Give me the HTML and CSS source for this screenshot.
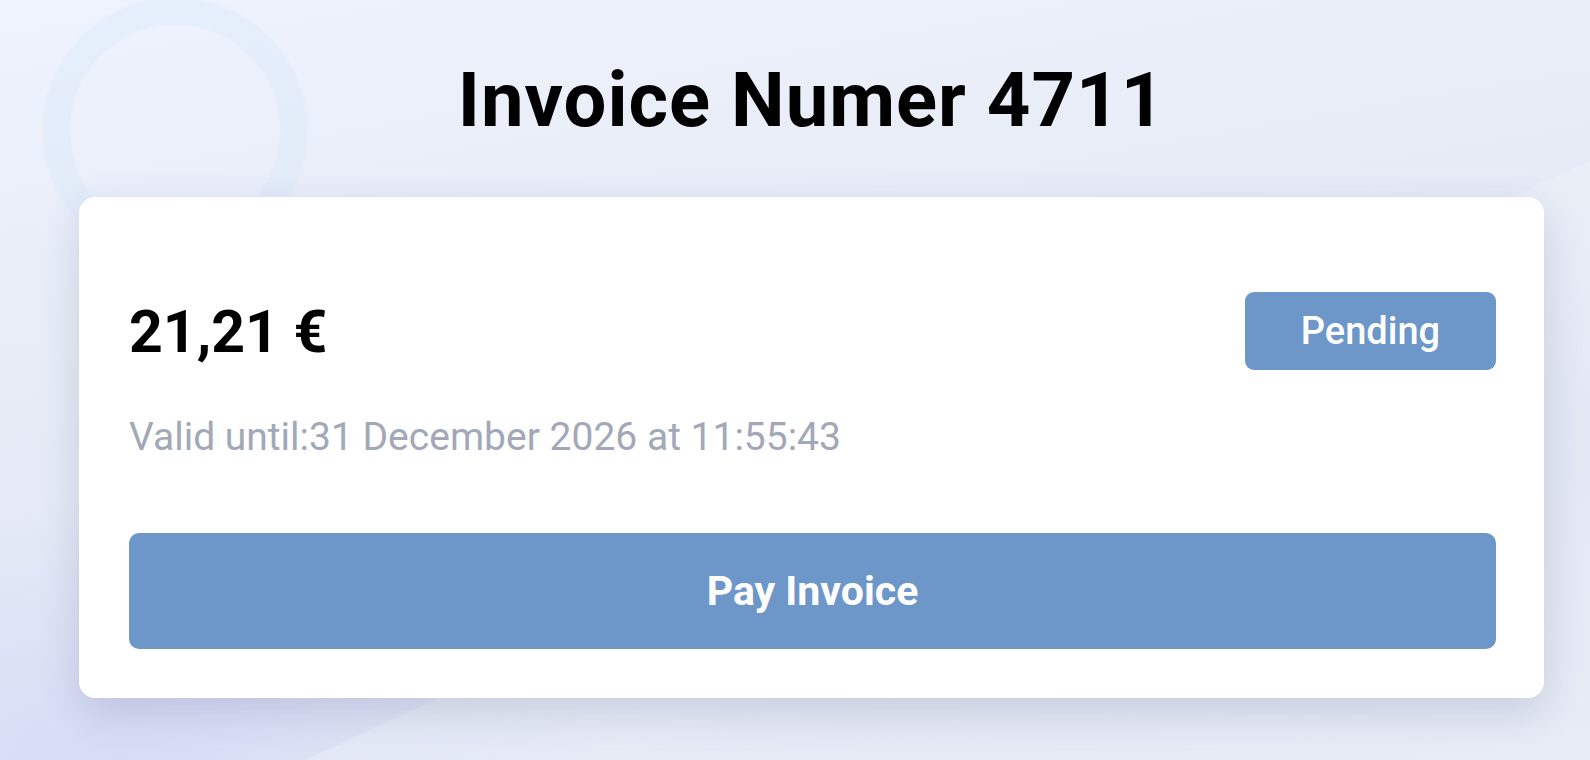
FILE: index.html
```html
<!DOCTYPE html>
<html lang="en">
<head>
  <meta charset="UTF-8" />
  <meta name="viewport" content="width=device-width, initial-scale=1.0" />
  <title>Invoice Numer 4711</title>
  <link rel="stylesheet" href="styles.css">
</head>
<body>
  <div class="page">
    <h1>Invoice Numer 4711</h1>

    <div class="card">
      <div class="card-head">
        <span class="amount">21,21 €</span>
        <span class="status">Pending</span>
      </div>
      <p class="valid">Valid until:31 December 2026 at 11:55:43</p>
      <button type="button" class="pay">Pay Invoice</button>
    </div>
  </div>
</body>
</html>
```

FILE: styles.css
```css
html, body {
  height: 100%;
}
body {
  font-family: Roboto, 'Liberation Sans', sans-serif;
  margin: 0;
  color: #000;
  overflow: hidden;
  background:
    radial-gradient(circle at 175px 130px, transparent 104px, rgba(214,230,250,0.35) 107px, rgba(214,230,250,0.35) 130px, transparent 134px),
    linear-gradient(155deg, transparent 60%, rgba(238,242,248,0.45) 60.2%, transparent 75%),
    radial-gradient(ellipse 500px 260px at 120px 760px, #d6dcf6 0%, rgba(214,220,246,0) 100%),
    linear-gradient(170deg, #eef3fd 0%, #e7ecf7 35%, #e4e8f5 70%, #e8ecf6 100%);
}
.page {
  padding: 56px 46px 0 79px;
}
h1 {
  margin: 0 0 52px;
  text-align: center;
  font-size: 76px;
  line-height: 89px;
  font-weight: 700;
  letter-spacing: 1px;
}
.card {
  background: #fff;
  border-radius: 16px;
  padding: 95px 48px 49px 50px;
  box-shadow: 0 14px 40px rgba(40,50,100,0.16);
}
.card-head {
  display: flex;
  justify-content: space-between;
  align-items: center;
}
.amount {
  font-size: 59px;
  font-weight: 700;
}
.status {
  display: flex;
  align-items: center;
  justify-content: center;
  width: 251px;
  height: 78px;
  background: #6e97c9;
  color: #fff;
  font-size: 38px;
  font-weight: 500;
  border-radius: 9px;
}
.valid {
  margin: 44px 0 73px;
  font-size: 39px;
  color: #a2a8b8;
}
.pay {
  display: block;
  width: 100%;
  height: 116px;
  border: none;
  border-radius: 10px;
  background: #6e97c9;
  color: #fff;
  font-family: inherit;
  font-size: 41px;
  font-weight: 700;
  cursor: pointer;
}
```
